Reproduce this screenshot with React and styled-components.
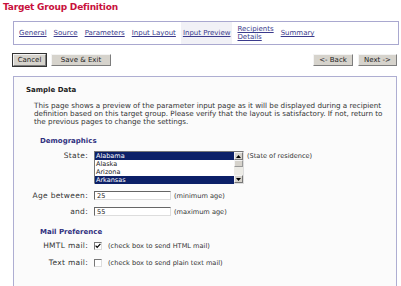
import React from "react";
import styled, { createGlobalStyle } from "styled-components";

const Global = createGlobalStyle`
  body {
    margin: 0;
    background: #fff;
    font-family: "DejaVu Sans", Verdana, sans-serif;
    font-size: 7px;
    color: #222;
  }
`;

const tabs = ["General", "Source", "Parameters", "Input Layout", "Input Preview", "Recipients\nDetails", "Summary"];
const states = [
  { name: "Alabama", selected: true },
  { name: "Alaska" },
  { name: "Arizona" },
  { name: "Arkansas", selected: true },
];

function App() {
  return (
    <Page>
      <Global />
      <Title>Target Group Definition</Title>

      <TabBar>
        {tabs.map((t) => (
          <Tab key={t} active={t === "Input Preview"}>
            {t.split("\n").map((line) => (
              <span key={line}>{line}</span>
            ))}
          </Tab>
        ))}
      </TabBar>

      <ButtonRow>
        <Group>
          <Button w={31} focused>Cancel</Button>
          <Button w={58}>Save &amp; Exit</Button>
        </Group>
        <Group>
          <Button w={38}>&lt;- Back</Button>
          <Button w={37}>Next -&gt;</Button>
        </Group>
      </ButtonRow>

      <Panel>
        <PanelTitle>Sample Data</PanelTitle>
        <Intro>
          This page shows a preview of the parameter input page as it will be displayed during a recipient<br />
          definition based on this target group. Please verify that the layout is satisfactory. If not, return to<br />
          the previous pages to change the settings.
        </Intro>

        <Section>Demographics</Section>
        <Form first>
          <Label>State:</Label>
          <Field>
            <ListBox>
              <Options>
                {states.map((s) => (
                  <Option key={s.name} selected={s.selected}>{s.name}</Option>
                ))}
              </Options>
              <ScrollBar>
                <Arrow>
                  <svg width="5" height="3" viewBox="0 0 5 3"><path d="M0 3 L2.5 0 L5 3 Z" fill="#000" /></svg>
                </Arrow>
                <Thumb />
                <Track />
                <Arrow>
                  <svg width="5" height="3" viewBox="0 0 5 3"><path d="M0 0 L2.5 3 L5 0 Z" fill="#000" /></svg>
                </Arrow>
              </ScrollBar>
            </ListBox>
            <Hint>(State of residence)</Hint>
          </Field>

          <Label gap={7}>Age between:</Label>
          <Field gap={7}>
            <TextInput>25</TextInput>
            <Hint>(minimum age)</Hint>
          </Field>

          <Label gap={7}>and:</Label>
          <Field gap={7}>
            <TextInput>55</TextInput>
            <Hint>(maximum age)</Hint>
          </Field>
        </Form>

        <Section mail>Mail Preference</Section>
        <Form>
          <Label gap={3}>HMTL mail:</Label>
          <Field gap={3}>
            <Check>
              <svg width="6" height="6" viewBox="0 0 6 6"><path d="M0.6 2.6 L2.2 4.4 L5.4 0.9" stroke="#000" strokeWidth="1.2" fill="none" /></svg>
            </Check>
            <Hint>(check box to send HTML mail)</Hint>
          </Field>
          <Label gap={8}>Text mail:</Label>
          <Field gap={8}>
            <Check />
            <Hint>(check box to send plain text mail)</Hint>
          </Field>
        </Form>
      </Panel>
    </Page>
  );
}

const Page = styled.div`
  width: 401px;
  height: 286px;
  overflow: hidden;
`;

const Title = styled.div`
  color: #c8103c;
  font-weight: bold;
  font-size: 9px;
  letter-spacing: -0.2px;
  padding: 1px 0 0 3px;
  height: 13px;
  line-height: 12px;
`;

const TabBar = styled.div`
  margin: 7px 2px 0 13px;
  height: 22px;
  border: 1px solid #a9a8cf;
  display: flex;
  align-items: stretch;
  padding-left: 3px;
`;

const Tab = styled.div`
  display: flex;
  flex-direction: column;
  justify-content: center;
  padding: 0 2px;
  margin-right: 3px;
  background: ${(p) => (p.active ? "#f1f1f6" : "transparent")};
  color: #3a3a8c;
  text-decoration: underline;
  line-height: 8px;
`;

const ButtonRow = styled.div`
  display: flex;
  justify-content: space-between;
  margin: 9px 4px 0 13px;
`;

const Group = styled.div`
  display: flex;
  gap: 5px;
`;

const Button = styled.div`
  width: ${(p) => p.w}px;
  height: 10px;
  line-height: 10px;
  text-align: center;
  background: #d6d3cc;
  border: 1px solid;
  border-color: #f4f4f4 #7d7d7d #7d7d7d #f4f4f4;
  outline: ${(p) => (p.focused ? "1px solid #333" : "none")};
  color: #222;
`;

const Panel = styled.div`
  margin: 10px 4px 0 13px;
  height: 209px;
  border: 1px solid #aeaed2;
  background: #fbfbfb;
  padding: 0 12px;
`;

const PanelTitle = styled.div`
  font-weight: bold;
  margin-top: 9px;
  line-height: 8px;
`;

const Intro = styled.p`
  margin: 8px 0 0 8px;
  font-size: 7.2px;
  line-height: 8px;
  color: #333;
  white-space: nowrap;
`;

const Section = styled.div`
  color: #30307f;
  font-weight: bold;
  font-size: 7px;
  margin: ${(p) => (p.mail ? 12 : 11)}px 0 0 14px;
  line-height: 9px;
`;

const Form = styled.div`
  display: grid;
  grid-template-columns: 62px 1fr;
  column-gap: 6px;
  margin-top: ${(p) => (p.first ? 5 : 1)}px;
`;

const Label = styled.div`
  text-align: right;
  padding-top: 1px;
  margin-top: ${(p) => p.gap || 0}px;
  font-size: 7.5px;
  letter-spacing: 0.3px;
  line-height: 8px;
  color: #333;
  white-space: nowrap;
`;

const Field = styled.div`
  display: flex;
  align-items: flex-start;
  gap: 3px;
  margin-top: ${(p) => p.gap || 0}px;
`;

const ListBox = styled.div`
  width: 150px;
  display: flex;
  border: 1px solid;
  border-color: #777 #ddd #ddd #777;
  background: #fff;
  box-sizing: border-box;
  height: 33px;
`;

const Options = styled.div`
  flex: 1;
`;

const Option = styled.div`
  height: 8px;
  line-height: 8px;
  font-size: 6.5px;
  padding-left: 1px;
  background: ${(p) => (p.selected ? "#0c2068" : "#fff")};
  color: ${(p) => (p.selected ? "#fff" : "#222")};
`;

const ScrollBar = styled.div`
  width: 9px;
  display: flex;
  flex-direction: column;
  background: #ecebe6;
`;

const Arrow = styled.div`
  height: 8px;
  background: #d6d3cc;
  border: 1px solid;
  border-color: #f4f4f4 #777 #777 #f4f4f4;
  display: flex;
  align-items: center;
  justify-content: center;
  box-sizing: border-box;
`;

const Thumb = styled.div`
  height: 7px;
  background: #d6d3cc;
  border: 1px solid;
  border-color: #f4f4f4 #999 #999 #f4f4f4;
  box-sizing: border-box;
`;

const Track = styled.div`
  flex: 1;
`;

const Hint = styled.span`
  line-height: 8px;
  font-size: 6.6px;
  padding-top: 1px;
  color: #333;
  white-space: nowrap;
`;

const TextInput = styled.div`
  width: 73px;
  height: 7px;
  line-height: 8px;
  font-size: 6.5px;
  padding-left: 2px;
  background: #fff;
  border: 1px solid;
  border-color: #666 #ddd #ddd #666;
  box-sizing: content-box;
`;

const Check = styled.span`
  width: 6px;
  height: 6px;
  margin: 1px 3px 0 0;
  border: 1px solid;
  border-color: #777 #ddd #ddd #777;
  background: #fff;
  display: flex;
  align-items: center;
  justify-content: center;
`;

export default App;
